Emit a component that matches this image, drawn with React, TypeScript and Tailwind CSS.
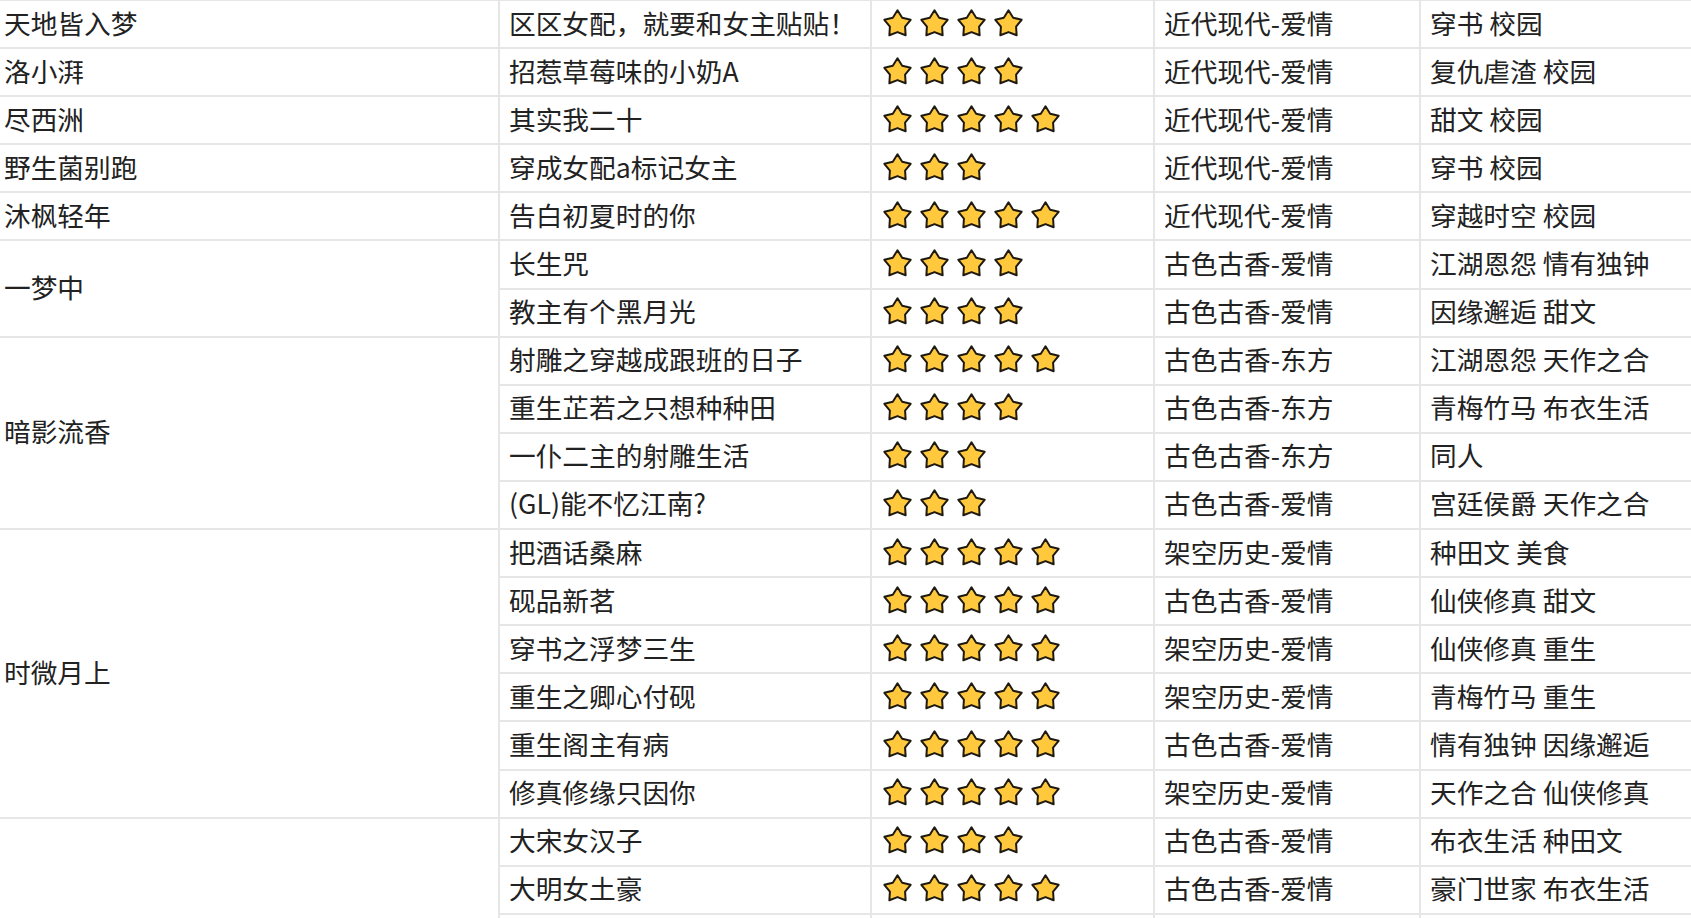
type Book = {
  title: string;
  stars: number;
  genre: string;
  tags: string;
};

type Group = {
  author: string;
  books: Book[];
};

const groups: Group[] = [
  { author: "天地皆入梦", books: [{ title: "区区女配，就要和女主贴贴！", stars: 4, genre: "近代现代-爱情", tags: "穿书 校园" }] },
  { author: "洛小湃", books: [{ title: "招惹草莓味的小奶A", stars: 4, genre: "近代现代-爱情", tags: "复仇虐渣 校园" }] },
  { author: "尽西洲", books: [{ title: "其实我二十", stars: 5, genre: "近代现代-爱情", tags: "甜文 校园" }] },
  { author: "野生菌别跑", books: [{ title: "穿成女配a标记女主", stars: 3, genre: "近代现代-爱情", tags: "穿书 校园" }] },
  { author: "沐枫轻年", books: [{ title: "告白初夏时的你", stars: 5, genre: "近代现代-爱情", tags: "穿越时空 校园" }] },
  {
    author: "一梦中",
    books: [
      { title: "长生咒", stars: 4, genre: "古色古香-爱情", tags: "江湖恩怨 情有独钟" },
      { title: "教主有个黑月光", stars: 4, genre: "古色古香-爱情", tags: "因缘邂逅 甜文" },
    ],
  },
  {
    author: "暗影流香",
    books: [
      { title: "射雕之穿越成跟班的日子", stars: 5, genre: "古色古香-东方", tags: "江湖恩怨 天作之合" },
      { title: "重生芷若之只想种种田", stars: 4, genre: "古色古香-东方", tags: "青梅竹马 布衣生活" },
      { title: "一仆二主的射雕生活", stars: 3, genre: "古色古香-东方", tags: "同人" },
      { title: "(GL)能不忆江南?", stars: 3, genre: "古色古香-爱情", tags: "宫廷侯爵 天作之合" },
    ],
  },
  {
    author: "时微月上",
    books: [
      { title: "把酒话桑麻", stars: 5, genre: "架空历史-爱情", tags: "种田文 美食" },
      { title: "砚品新茗", stars: 5, genre: "古色古香-爱情", tags: "仙侠修真 甜文" },
      { title: "穿书之浮梦三生", stars: 5, genre: "架空历史-爱情", tags: "仙侠修真 重生" },
      { title: "重生之卿心付砚", stars: 5, genre: "架空历史-爱情", tags: "青梅竹马 重生" },
      { title: "重生阁主有病", stars: 5, genre: "古色古香-爱情", tags: "情有独钟 因缘邂逅" },
      { title: "修真修缘只因你", stars: 5, genre: "架空历史-爱情", tags: "天作之合 仙侠修真" },
    ],
  },
  {
    author: "一纸荒年",
    books: [
      { title: "大宋女汉子", stars: 4, genre: "古色古香-爱情", tags: "布衣生活 种田文" },
      { title: "大明女土豪", stars: 5, genre: "古色古香-爱情", tags: "豪门世家 布衣生活" },
      { title: "大唐女掌柜", stars: 4, genre: "古色古香-爱情", tags: "种田文 美食" },
      { title: "大清女商人", stars: 4, genre: "古色古香-爱情", tags: "布衣生活 甜文" },
      { title: "大汉女将军", stars: 5, genre: "古色古香-爱情", tags: "女强 种田文" },
      { title: "大秦女县令", stars: 4, genre: "古色古香-爱情", tags: "布衣生活 种田文" },
    ],
  },
];

function Star() {
  return (
    <svg width="31" height="30" viewBox="0 0 28 27" className="shrink-0">
      <polygon
        points="14,2 18.23,8.68 25.89,10.64 20.85,16.72 21.35,24.61 14,21.7 6.65,24.61 7.15,16.72 2.11,10.64 9.77,8.68"
        fill="#FFC83D"
        stroke="#1f1a10"
        strokeWidth="1.8"
        strokeLinejoin="round"
      />
    </svg>
  );
}

function Stars({ n }: { n: number }) {
  return (
    <div className="flex items-center gap-[6px]">
      {Array.from({ length: n }).map((_, i) => (
        <Star key={i} />
      ))}
    </div>
  );
}

const cell = "border-2 border-[#e6e6e6] h-[48.1px] pt-0 pb-[3px] px-[9px] align-middle whitespace-nowrap";

export default function App() {
  return (
    <div
      className="w-full h-[918px] overflow-hidden bg-white text-[#222] text-[26.7px] leading-[34px]"
      style={{ fontFamily: '"Microsoft YaHei", "Noto Sans CJK SC", sans-serif' }}
    >
      <table className="table-fixed border-collapse w-[1725px] ml-[-7px] mt-[-1px]">
        <colgroup>
          <col className="w-[505px]" />
          <col className="w-[372px]" />
          <col className="w-[283px]" />
          <col className="w-[266px]" />
          <col className="w-[299px]" />
        </colgroup>
        <tbody>
          {groups.map((g) =>
            g.books.map((b, i) => (
              <tr key={g.author + b.title}>
                {i === 0 && (
                  <td rowSpan={g.books.length} className={cell}>
                    {g.author}
                  </td>
                )}
                <td className={cell}>{b.title}</td>
                <td className={cell + " pl-[10px]"}>
                  <Stars n={b.stars} />
                </td>
                <td className={cell}>{b.genre}</td>
                <td className={cell}>{b.tags}</td>
              </tr>
            )),
          )}
        </tbody>
      </table>
    </div>
  );
}
